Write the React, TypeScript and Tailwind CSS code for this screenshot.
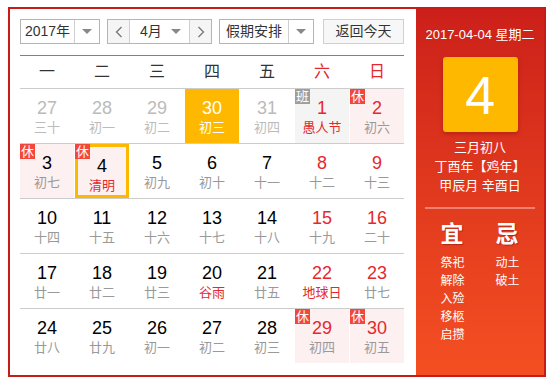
import React from "react";

type Day = {
  n: number;
  lunar: string;
  other?: boolean;
  weekend?: boolean;
  fest?: boolean;
  badge?: "休" | "班";
  today?: boolean;
  selected?: boolean;
};

const weeks: Day[][] = [
  [
    { n: 27, lunar: "三十", other: true },
    { n: 28, lunar: "初一", other: true },
    { n: 29, lunar: "初二", other: true },
    { n: 30, lunar: "初三", other: true, today: true },
    { n: 31, lunar: "初四", other: true },
    { n: 1, lunar: "愚人节", weekend: true, fest: true, badge: "班" },
    { n: 2, lunar: "初六", weekend: true, badge: "休" },
  ],
  [
    { n: 3, lunar: "初七", badge: "休" },
    { n: 4, lunar: "清明", fest: true, badge: "休", selected: true },
    { n: 5, lunar: "初九" },
    { n: 6, lunar: "初十" },
    { n: 7, lunar: "十一" },
    { n: 8, lunar: "十二", weekend: true },
    { n: 9, lunar: "十三", weekend: true },
  ],
  [
    { n: 10, lunar: "十四" },
    { n: 11, lunar: "十五" },
    { n: 12, lunar: "十六" },
    { n: 13, lunar: "十七" },
    { n: 14, lunar: "十八" },
    { n: 15, lunar: "十九", weekend: true },
    { n: 16, lunar: "二十", weekend: true },
  ],
  [
    { n: 17, lunar: "廿一" },
    { n: 18, lunar: "廿二" },
    { n: 19, lunar: "廿三" },
    { n: 20, lunar: "谷雨", fest: true },
    { n: 21, lunar: "廿五" },
    { n: 22, lunar: "地球日", weekend: true, fest: true },
    { n: 23, lunar: "廿七", weekend: true },
  ],
  [
    { n: 24, lunar: "廿八" },
    { n: 25, lunar: "廿九" },
    { n: 26, lunar: "初一" },
    { n: 27, lunar: "初二" },
    { n: 28, lunar: "初三" },
    { n: 29, lunar: "初四", weekend: true, badge: "休" },
    { n: 30, lunar: "初五", weekend: true, badge: "休" },
  ],
];

const weekdays = ["一", "二", "三", "四", "五", "六", "日"];

function Caret() {
  return (
    <span className="block w-0 h-0 border-x-[5px] border-x-transparent border-t-[5px] border-t-[#888]" />
  );
}

function Cell({ d }: { d: Day }) {
  let bg = "bg-white";
  if (d.today) bg = "bg-[#ffb800]";
  else if (d.badge === "班") bg = "bg-[#f4f4f4]";
  else if (d.badge === "休") bg = "bg-[#fdf0f0]";

  let numColor = "text-black";
  if (d.today) numColor = "text-white";
  else if (d.other) numColor = "text-[#bbbbbb]";
  else if (d.weekend) numColor = "text-[#e5282d]";

  let lunarColor = "text-[#999999]";
  if (d.today) lunarColor = "text-white";
  else if (d.other) lunarColor = "text-[#bbbbbb]";
  else if (d.fest) lunarColor = "text-[#e5282d]";

  return (
    <div
      className={`relative h-[54px] flex flex-col items-center pt-[8px] ${bg} ${
        d.selected ? "border-[3px] border-[#ffb800] pt-[5px]" : ""
      }`}
    >
      {d.badge ? (
        <span
          className={`absolute ${d.selected ? "-left-[3px] -top-[3px]" : "left-0 top-0"} w-[15px] h-[15px] flex items-center justify-center text-[13px] leading-none text-white ${
            d.badge === "休" ? "bg-[#f4473b]" : "bg-[#9e9e9e]"
          }`}
        >
          {d.badge}
        </span>
      ) : null}
      <span className={`text-[18px] leading-[22px] font-['Liberation_Sans',sans-serif] ${numColor}`}>
        {d.n}
      </span>
      <span className={`text-[13px] leading-[18px] ${lunarColor}`}>{d.lunar}</span>
    </div>
  );
}

export default function App() {
  return (
    <div className="pl-[8px] pt-[7px] font-['Liberation_Sans','Noto_Sans_CJK_SC',sans-serif]">
      <div className="w-[538px] h-[370px] flex border-2 border-[#c91a1a] shadow-[0_2px_2px_rgba(0,0,0,0.06)]">
        {/* calendar */}
        <div className="w-[406px] pl-[10px] pr-[12px] pt-[10px] bg-white">
          <div className="flex items-center h-[25px] text-[14px] text-[#333]">
            <div className="flex h-[25px] w-[80px] border border-[#b5b5b5]">
              <span className="flex-1 flex items-center justify-center">2017年</span>
              <span className="w-[25px] border-l border-[#cfcfcf] flex items-center justify-center">
                <Caret />
              </span>
            </div>
            <div className="ml-[7px] flex h-[25px] w-[105px] border border-[#b5b5b5]">
              <span className="w-[22px] flex items-center justify-center bg-[#f5f5f5] border-r border-[#cfcfcf] text-[#777]">
                <svg width="8" height="12" viewBox="0 0 8 12" fill="none" stroke="#777" strokeWidth="1.3">
                  <path d="M6.5 1 L1.5 6 L6.5 11" />
                </svg>
              </span>
              <span className="flex-1 flex items-center pl-[10px] pr-[8px]">
                <span className="flex-1">4月</span>
                <Caret />
              </span>
              <span className="w-[22px] flex items-center justify-center bg-[#f5f5f5] border-l border-[#cfcfcf]">
                <svg width="8" height="12" viewBox="0 0 8 12" fill="none" stroke="#777" strokeWidth="1.3">
                  <path d="M1.5 1 L6.5 6 L1.5 11" />
                </svg>
              </span>
            </div>
            <div className="ml-[7px] flex h-[25px] w-[95px] border border-[#b5b5b5]">
              <span className="flex-1 flex items-center justify-center">假期安排</span>
              <span className="w-[25px] border-l border-[#cfcfcf] flex items-center justify-center">
                <Caret />
              </span>
            </div>
            <button
              type="button"
              className="ml-[9px] h-[25px] w-[81px] border border-[#d0d0d0] bg-[#f7f7f7] text-[14px] text-[#333]"
            >
              返回今天
            </button>
          </div>

          <div className="mt-[11px] border-t border-[#e4584f]" />
          <div className="grid grid-cols-7 gap-x-px h-[33px] border-b border-[#cccccc] text-[16px]">
            {weekdays.map((w, i) => (
              <div
                key={w}
                className={`flex items-center justify-center ${i >= 5 ? "text-[#e5282d]" : "text-[#333]"}`}
              >
                {w}
              </div>
            ))}
          </div>

          {weeks.map((week, wi) => (
            <div
              key={wi}
              className={`grid grid-cols-7 gap-x-px ${wi < weeks.length - 1 ? "border-b border-[#cccccc]" : ""}`}
            >
              {week.map((d, di) => (
                <Cell key={di} d={d} />
              ))}
            </div>
          ))}
        </div>

        {/* side panel */}
        <div className="flex-1 flex flex-col items-center bg-gradient-to-b from-[#cc1f1a] to-[#f44f22] text-white pt-[17px]">
          <div className="text-[13px] leading-[18px]">2017-04-04 星期二</div>
          <div className="mt-[13px] w-[75px] h-[75px] rounded-[3px] bg-[#ffb800] shadow-[0_2px_4px_rgba(120,0,0,0.35)] flex items-center justify-center">
            <span className="text-[54px] leading-none font-['Liberation_Sans',sans-serif]">4</span>
          </div>
          <div className="mt-[6px] text-[13px] leading-[19px] text-center">
            <div>三月初八</div>
            <div>丁酉年【鸡年】</div>
            <div>甲辰月 辛酉日</div>
          </div>
          <div className="mt-[12px] w-[110px] border-t-2 border-[#f07f74]" />
          <div className="mt-[11px] flex gap-[31px]">
            <div className="w-[24px] flex flex-col">
              <span className="text-[23px] leading-[28px] font-bold [text-shadow:1px_1px_1px_rgba(120,0,0,0.4)]">宜</span>
              <div className="mt-[6px] text-[12px] leading-[18px]">
                <div>祭祀</div>
                <div>解除</div>
                <div>入殓</div>
                <div>移柩</div>
                <div>启攒</div>
              </div>
            </div>
            <div className="w-[24px] flex flex-col">
              <span className="text-[23px] leading-[28px] font-bold [text-shadow:1px_1px_1px_rgba(120,0,0,0.4)]">忌</span>
              <div className="mt-[6px] text-[12px] leading-[18px]">
                <div>动土</div>
                <div>破土</div>
              </div>
            </div>
          </div>
        </div>
      </div>
    </div>
  );
}
